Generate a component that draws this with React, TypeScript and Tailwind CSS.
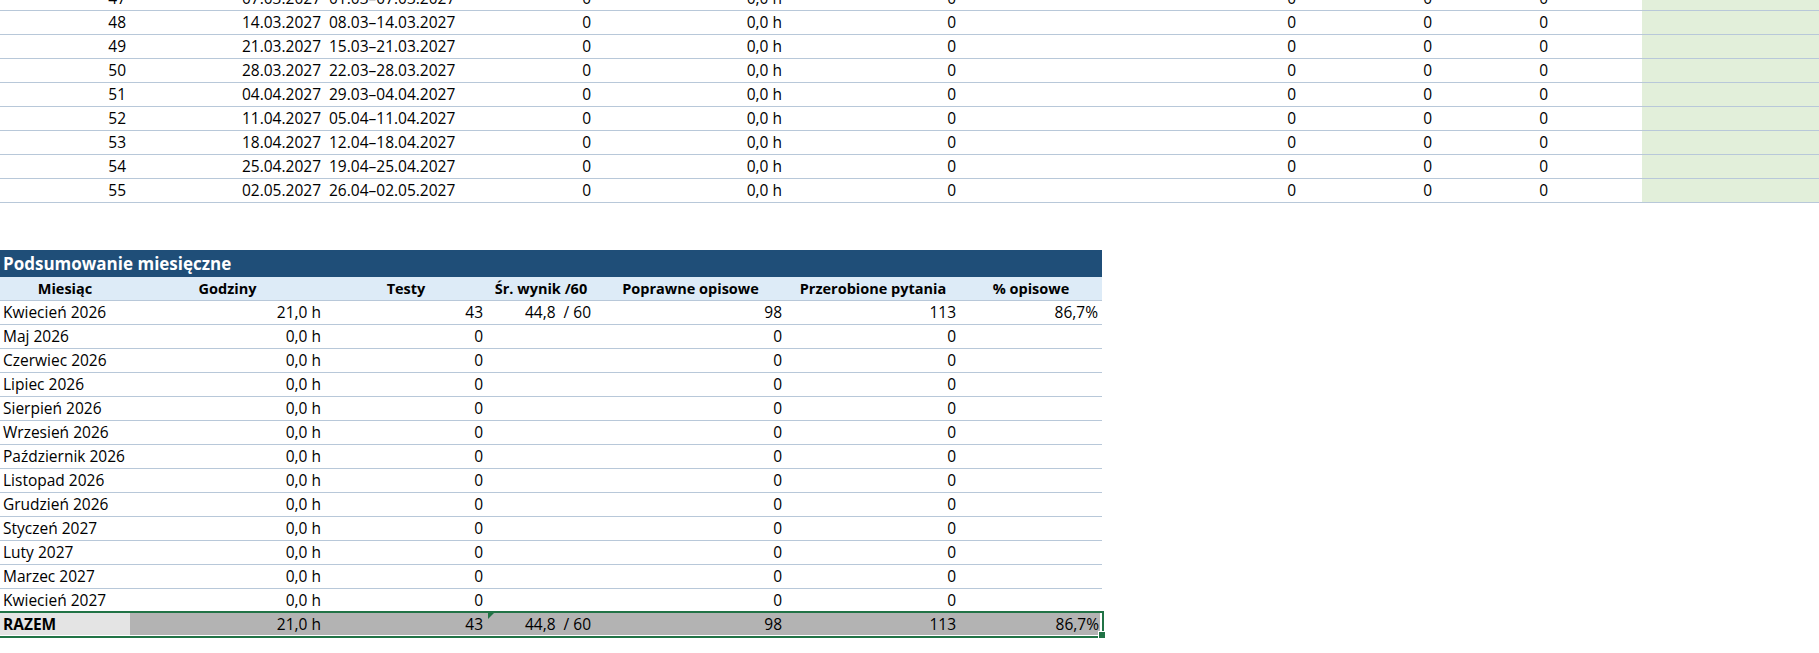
import React from "react";

// shared sheet columns A..L (px widths at 120% zoom)
const COLS =
  "grid grid-cols-[130px_195px_162px_108px_191px_174px_142px_198px_136px_116px_90px_1fr]";
const LOW_COLS =
  "grid grid-cols-[130px_195px_162px_108px_191px_174px_142px] w-[1102px]";

const weeks: [number, string, string][] = [
  [47, "07.03.2027", "01.03–07.03.2027"],
  [48, "14.03.2027", "08.03–14.03.2027"],
  [49, "21.03.2027", "15.03–21.03.2027"],
  [50, "28.03.2027", "22.03–28.03.2027"],
  [51, "04.04.2027", "29.03–04.04.2027"],
  [52, "11.04.2027", "05.04–11.04.2027"],
  [53, "18.04.2027", "12.04–18.04.2027"],
  [54, "25.04.2027", "19.04–25.04.2027"],
  [55, "02.05.2027", "26.04–02.05.2027"],
];

interface Month {
  name: string;
  hours: string;
  tests: string;
  avg?: string;
  correct: string;
  done: string;
  pct?: string;
}

const months: Month[] = [
  { name: "Kwiecień 2026", hours: "21,0 h", tests: "43", avg: "44,8  / 60", correct: "98", done: "113", pct: "86,7%" },
  { name: "Maj 2026", hours: "0,0 h", tests: "0", correct: "0", done: "0" },
  { name: "Czerwiec 2026", hours: "0,0 h", tests: "0", correct: "0", done: "0" },
  { name: "Lipiec 2026", hours: "0,0 h", tests: "0", correct: "0", done: "0" },
  { name: "Sierpień 2026", hours: "0,0 h", tests: "0", correct: "0", done: "0" },
  { name: "Wrzesień 2026", hours: "0,0 h", tests: "0", correct: "0", done: "0" },
  { name: "Październik 2026", hours: "0,0 h", tests: "0", correct: "0", done: "0" },
  { name: "Listopad 2026", hours: "0,0 h", tests: "0", correct: "0", done: "0" },
  { name: "Grudzień 2026", hours: "0,0 h", tests: "0", correct: "0", done: "0" },
  { name: "Styczeń 2027", hours: "0,0 h", tests: "0", correct: "0", done: "0" },
  { name: "Luty 2027", hours: "0,0 h", tests: "0", correct: "0", done: "0" },
  { name: "Marzec 2027", hours: "0,0 h", tests: "0", correct: "0", done: "0" },
  { name: "Kwiecień 2027", hours: "0,0 h", tests: "0", correct: "0", done: "0" },
];

const headers = [
  "Miesiąc",
  "Godziny",
  "Testy",
  "Śr. wynik /60",
  "Poprawne opisowe",
  "Przerobione pytania",
  "% opisowe",
];

const num = "pr-1 text-right whitespace-pre";

export default function App() {
  return (
    <div className="w-[1819px] h-[653px] overflow-hidden bg-white text-black text-[15.5px] leading-[23px] [font-family:'Open_Sans',sans-serif]">
      {/* tygodnie */}
      <div className="-mt-[13px]">
        {weeks.map(([n, date, range]) => (
          <div key={n} className={`${COLS} h-[24px] border-b border-[#b8c8d9]`}>
            <div className={num}>{n}</div>
            <div className={num}>{date}</div>
            <div className="pl-1 whitespace-nowrap">{range}</div>
            <div className={num}>0</div>
            <div className={num}>0,0 h</div>
            <div className={num}>0</div>
            <div />
            <div className={num}>0</div>
            <div className={num}>0</div>
            <div className={num}>0</div>
            <div />
            <div className="bg-[#e2efda]" />
          </div>
        ))}
      </div>

      {/* Podsumowanie miesięczne */}
      <div className="mt-[47px]">
        <div className="w-[1102px] h-[27px] bg-[#1f4e78] pl-[3px] text-white font-bold text-[17px] leading-[27px]">
          Podsumowanie miesięczne
        </div>
        <div className={`${LOW_COLS} h-[24px] bg-[#ddebf7] border-b border-[#b8c8d9] font-bold text-[14.5px]`}>
          {headers.map((h) => (
            <div key={h} className="text-center whitespace-nowrap">
              {h}
            </div>
          ))}
        </div>
        {months.map((m) => (
          <div key={m.name} className={`${LOW_COLS} h-[24px] border-b border-[#b8c8d9]`}>
            <div className="pl-[3px] whitespace-nowrap">{m.name}</div>
            <div className={num}>{m.hours}</div>
            <div className={num}>{m.tests}</div>
            <div className={num}>{m.avg ?? ""}</div>
            <div className={num}>{m.correct}</div>
            <div className={num}>{m.done}</div>
            <div className={num}>{m.pct ?? ""}</div>
          </div>
        ))}

        {/* RAZEM + zaznaczenie */}
        <div className="relative h-[25px]">
          <div className={`${LOW_COLS} !w-[1100px] h-[22px] bg-[#b3b3b3] leading-[22px]`}>
            <div className="bg-[#e4e4e4] pl-[3px] font-bold">RAZEM</div>
            <div className={num}>21,0 h</div>
            <div className={num}>43</div>
            <div className={`${num} relative`}>
              44,8  / 60
              <span className="absolute left-[1px] top-0 w-0 h-0 border-t-[6px] border-r-[6px] border-t-[#217346] border-r-transparent" />
            </div>
            <div className={num}>98</div>
            <div className={num}>113</div>
            <div className="pr-[3px] text-right">86,7%</div>
          </div>
          <div className="absolute -top-[2px] -left-[2px] w-[1106px] h-[27px] border-2 border-[#217346] pointer-events-none" />
          <div className="absolute left-[1098px] top-[18px] w-[8px] h-[8px] bg-[#217346] border border-white" />
        </div>
      </div>
    </div>
  );
}
